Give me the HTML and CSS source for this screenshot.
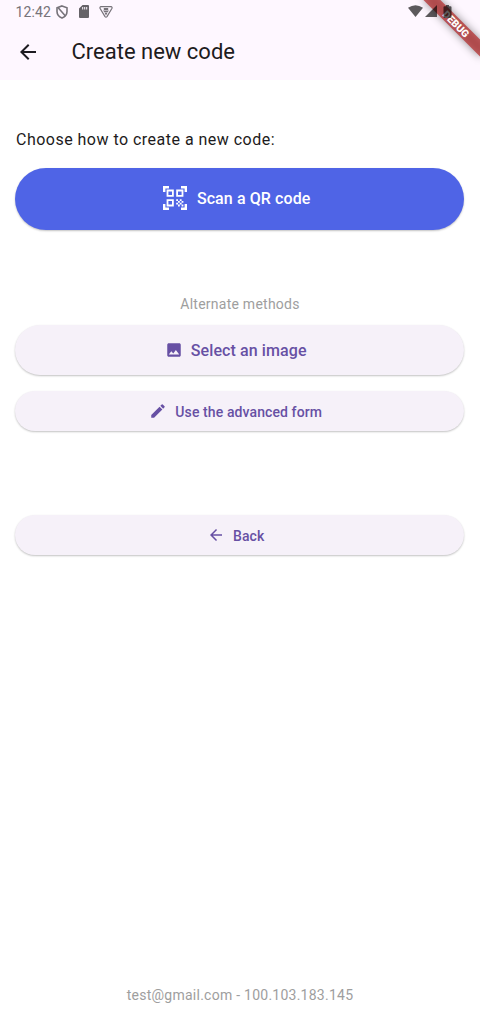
FILE: index.html
```html
<!DOCTYPE html>
<html lang="en">
<head>
<meta charset="utf-8">
<title>Create new code</title>
<link rel="stylesheet" href="styles.css">
</head>
<body>
<div class="screen">
  <header class="top">
    <div class="status">
      <span class="clock">12:42</span>
      <svg class="shield" width="12" height="14" viewBox="0 0 12 14" fill="none" stroke="currentColor" stroke-width="1.600"><path d="M6 .9 11 2.7v3.9c0 3-2 5.3-5 6.5-3-1.200-5-3.500-5-6.500V2.700z"/><path d="M2 2.400 9.600 11.200"/></svg>
      <svg class="sd" width="10" height="13" viewBox="0 0 10 13"><path fill="currentColor" fill-rule="evenodd" d="M3.600 0H9a1 1 0 0 1 1 1v11a1 1 0 0 1-1 1H1a1 1 0 0 1-1-1V3.600zM3.200 2v2.500h1V2zm2 0v2.500h1V2zm2 0v2.500h1V2z"/></svg>
      <svg class="tri" width="14" height="12" viewBox="0 0 14 12"><path d="M2 .7h10q1.500.2 1 1.600L8 10.600q-1 1.200-2 0L1 2.300Q.6.900 2 .7z" fill="none" stroke="currentColor" stroke-width="1.200"/><path d="M4.800 2h4.400v2H4.800zM4 4.600h6L8.600 6.200H5.400zM5.500 6.800h3L7 9.400z" fill="currentColor"/></svg>
      <svg class="signals" width="46" height="14" viewBox="0 0 46 14" fill="currentColor"><path d="M0 2.700Q7.500-2.400 15 2.700L7.500 12z"/><path d="M29 0v12H17z"/><path d="M38 0h3v1.300h1.500q1 0 1 1V12q0 1-1 1h-6q-1 0-1-1V2.300q0-1 1-1H38z"/></svg>
    </div>
    <div class="appbar">
      <svg class="arrow" width="24" height="24" viewBox="0 0 24 24"><path fill="currentColor" d="M20 11H7.830l5.590-5.590L12 4l-8 8 8 8 1.410-1.410L7.830 13H20z"/></svg>
      <h1>Create new code</h1>
    </div>
    <svg class="banner" width="80" height="80" viewBox="0 0 80 80">
      <defs><filter id="soft" x="-40%" y="-200%" width="180%" height="500%"><feGaussianBlur stdDeviation="4"/></filter></defs>
      <g transform="translate(80 0) rotate(45)">
        <rect x="-40" y="28" width="80" height="12" fill="#000" fill-opacity=".42" filter="url(#soft)"/>
        <rect x="-42" y="28" width="84" height="12" fill="#b42626" fill-opacity=".7"/>
        <text class="banner-text" x="0" y="37.600" text-anchor="middle">DEBUG</text>
      </g>
    </svg>
  </header>
  <main>
    <p class="lead">Choose how to create a new code:</p>
    <button class="btn scan">
      <svg width="24" height="24" viewBox="0 0 24 24"><path fill="currentColor" d="M9.500 6.500v3h-3v-3h3M11 5H5v6h6V5zm-1.500 9.500v3h-3v-3h3M11 13H5v6h6v-6zm6.500-6.500v3h-3v-3h3M19 5h-6v6h6V5zm-6 8h1.500v1.500H13V13zm1.500 1.500H16V16h-1.500v-1.500zM16 13h1.500v1.500H16V13zm-3 3h1.500v1.500H13V16zm1.500 1.500H16V19h-1.500v-1.500zM16 16h1.500v1.500H16V16zm1.500-1.500H19V16h-1.500v-1.500zm0 3H19V19h-1.500v-1.500zM22 7h-2V4h-3V2h5v5zm0 15v-5h-2v3h-3v2h5zM2 22h5v-2H4v-3H2v5zM2 2v5h2V4h3V2H2z" transform="translate(-2.400 -2.400) scale(1.200)"/></svg>
      <span>Scan a QR code</span>
    </button>
    <p class="alt">Alternate methods</p>
    <button class="btn image">
      <svg width="18" height="18" viewBox="0 0 24 24"><path fill="currentColor" d="M21 19V5c0-1.100-.9-2-2-2H5c-1.100 0-2 .9-2 2v14c0 1.100.9 2 2 2h14c1.100 0 2-.9 2-2zM8.500 13.500l2.500 3.010L14.500 12l4.500 6H5l3.500-4.500z"/></svg>
      <span>Select an image</span>
    </button>
    <button class="btn form">
      <svg width="18" height="18" viewBox="0 0 24 24"><path fill="currentColor" d="M3 17.250V21h3.750L17.810 9.940l-3.750-3.750L3 17.250zM20.710 7.040a1 1 0 0 0 0-1.410l-2.340-2.340a1 1 0 0 0-1.410 0l-1.830 1.830 3.750 3.750 1.830-1.830z"/></svg>
      <span>Use the advanced form</span>
    </button>
    <button class="btn back">
      <svg width="18" height="18" viewBox="0 0 24 24"><path fill="currentColor" d="M20 11H7.830l5.590-5.590L12 4l-8 8 8 8 1.410-1.410L7.830 13H20z"/></svg>
      <span>Back</span>
    </button>
  </main>
  <footer>test@gmail.com - 100.103.183.145</footer>
</div>
</body>
</html>
```
FILE: styles.css
```css
* { box-sizing: border-box; }
body { margin: 0; background: #fff; color: #1d1b20; font-family: Roboto, "Liberation Sans", sans-serif; }
.screen { height: 1014px; display: flex; flex-direction: column; overflow: hidden; }
.top { position: relative; height: 80px; background: #fef7ff; }
.status { height: 24px; padding: 0 0 1px 15.5px; display: flex; align-items: center; color: #77737a; }
.clock { width: 40px; font-size: 14px; line-height: 22px; letter-spacing: .1px; }
.sd { margin-left: 11px; color: #656267; }
.tri { margin-left: 10px; }
.signals { position: relative; z-index: 1; margin-left: auto; margin-right: 26px; color: rgba(0,0,0,.64); }
.appbar { height: 56px; display: flex; align-items: center; padding-left: 15.5px; }
h1 { margin: 0 0 0 32px; font-size: 22px; font-weight: 400; line-height: 28px; }
.banner { position: absolute; top: 0; right: 0; }
.banner-text { fill: #fff; font-size: 10.2px; font-weight: 900; }
main { flex: 1; padding: 0 16px; display: flex; flex-direction: column; }
p { margin: 0; }
.lead { margin-top: 47.5px; font-size: 16px; line-height: 24px; letter-spacing: .48px; }
.btn { border: 0; border-radius: 31px; margin: 0 0 0 -.6px; padding: 2px 8px 0 0; display: flex; align-items: center; justify-content: center; gap: 8px; font: 500 14px/20px Roboto, "Liberation Sans", sans-serif; letter-spacing: .1px; color: #6750a4; background: #f6f1f9; box-shadow: 0 1px 2px rgba(0,0,0,.24); }
.btn svg { margin-top: -1px; }
.scan { margin-top: 16px; height: 62px; padding: 0 6px 0 0; color: #fff; background: #4f64e6; font-size: 16px; gap: 10px; }
.alt { margin-top: 64px; text-align: center; font-size: 14px; line-height: 20px; letter-spacing: .25px; color: #9e9e9e; }
.image { margin-top: 11.4px; height: 50px; font-size: 16px; }
.form { margin-top: 16px; height: 40px; }
.back { margin-top: 84px; height: 40px; }
footer { height: 38px; line-height: 38px; text-align: center; font-size: 14px; letter-spacing: .25px; color: #9e9e9e; }
```
